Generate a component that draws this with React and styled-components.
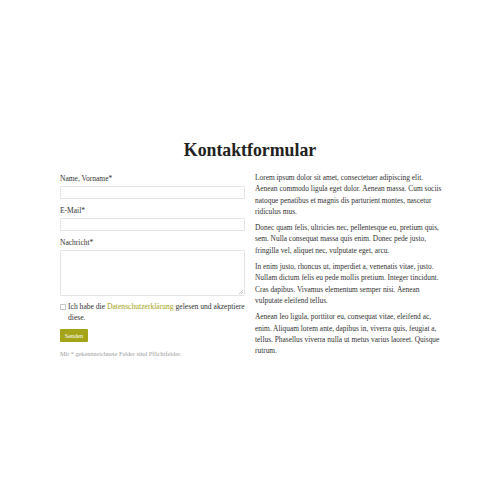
import React from "react";
import styled, { createGlobalStyle } from "styled-components";

const Global = createGlobalStyle`
  html, body { margin: 0; padding: 0; background: #fff; }
  body { font-family: "Liberation Serif", "DejaVu Serif", serif; color: #333; }
`;

const Page = styled.div`
  width: 380px;
  margin: 0 auto;
  padding-top: 139px;
`;

const Title = styled.h1`
  margin: 0 0 12px;
  text-align: center;
  font-family: "Liberation Serif", serif;
  font-size: 17.8px;
  line-height: 22px;
  font-weight: bold;
  color: #222;
`;

const Columns = styled.div`
  display: grid;
  grid-template-columns: 185px 185px;
  column-gap: 10px;
`;

const Form = styled.form`
  display: flex;
  flex-direction: column;
`;

const Label = styled.label`
  display: block;
  font-size: 7.5px;
  line-height: 11px;
  color: #333;
  margin-bottom: 2px;
`;

const Field = styled.input`
  display: block;
  box-sizing: border-box;
  width: 100%;
  height: 13px;
  margin: 0 0 6px;
  border: 1px solid #e4e4e4;
  border-radius: 1px;
  background: #fff;
  padding: 0;
  outline: none;
`;

const TextArea = styled.textarea`
  display: block;
  box-sizing: border-box;
  width: 100%;
  height: 46px;
  margin: 0 0 5px;
  border: 1px solid #e4e4e4;
  border-radius: 1px;
  padding: 0;
  resize: vertical;
  outline: none;
  &::-webkit-resizer {
    background: linear-gradient(
        135deg,
        transparent 0 45%,
        #c4c4c4 45% 58%,
        transparent 58% 72%,
        #c4c4c4 72% 85%,
        transparent 85%
      )
      right 1px bottom 1px / 4px 4px no-repeat;
  }
`;

const ConsentRow = styled.div`
  display: flex;
  align-items: flex-start;
  gap: 2px;
`;

const Box = styled.span`
  flex: none;
  width: 4px;
  height: 4px;
  margin-top: 3px;
  border: 0.5px solid #c8c8c8;
  border-radius: 0.5px;
  background: #fff;
`;

const ConsentText = styled.p`
  margin: 0;
  font-size: 7.6px;
  line-height: 11.3px;
  color: #333;
`;

const Link = styled.a`
  color: #a3a313;
  text-decoration: none;
`;

const Button = styled.button`
  align-self: flex-start;
  margin-top: 5px;
  width: 28px;
  height: 13px;
  padding: 0;
  border: none;
  border-radius: 1px;
  background: #a3a417;
  color: #fff;
  font-family: "Liberation Serif", serif;
  font-size: 6.3px;
  line-height: 13px;
`;

const Note = styled.p`
  margin: 7px 0 0;
  font-size: 6.3px;
  line-height: 9px;
  color: #a0a0a0;
`;

const Text = styled.div`
  font-size: 7.4px;
  line-height: 11.3px;
  color: #333;
  margin-top: -1px;
  white-space: nowrap;
`;

const P = styled.p`
  margin: 0 0 5px;
`;

const paragraphs = [
  [
    "Lorem ipsum dolor sit amet, consectetuer adipiscing elit.",
    "Aenean commodo ligula eget dolor. Aenean massa. Cum sociis",
    "natoque penatibus et magnis dis parturient montes, nascetur",
    "ridiculus mus.",
  ],
  [
    "Donec quam felis, ultricies nec, pellentesque eu, pretium quis,",
    "sem. Nulla consequat massa quis enim. Donec pede justo,",
    "fringilla vel, aliquet nec, vulputate eget, arcu.",
  ],
  [
    "In enim justo, rhoncus ut, imperdiet a, venenatis vitae, justo.",
    "Nullam dictum felis eu pede mollis pretium. Integer tincidunt.",
    "Cras dapibus. Vivamus elementum semper nisi. Aenean",
    "vulputate eleifend tellus.",
  ],
  [
    "Aenean leo ligula, porttitor eu, consequat vitae, eleifend ac,",
    "enim. Aliquam lorem ante, dapibus in, viverra quis, feugiat a,",
    "tellus. Phasellus viverra nulla ut metus varius laoreet. Quisque",
    "rutrum.",
  ],
];

export default function App() {
  return (
    <>
      <Global />
      <Page>
        <Title>Kontaktformular</Title>
        <Columns>
          <Form onSubmit={(e) => e.preventDefault()}>
            <Label>Name, Vorname*</Label>
            <Field type="text" />
            <Label>E-Mail*</Label>
            <Field type="email" />
            <Label>Nachricht*</Label>
            <TextArea />
            <ConsentRow>
              <Box />
              <ConsentText>
                Ich habe die <Link href="#">Datenschutzerklärung</Link> gelesen und akzeptiere
                <br />
                diese.
              </ConsentText>
            </ConsentRow>
            <Button type="submit">Senden</Button>
            <Note>Mit * gekennzeichnete Felder sind Pflichtfelder.</Note>
          </Form>
          <Text>
            {paragraphs.map((lines, i) => (
              <P key={i}>
                {lines.map((l, j) => (
                  <React.Fragment key={j}>
                    {l}
                    {j < lines.length - 1 && <br />}
                  </React.Fragment>
                ))}
              </P>
            ))}
          </Text>
        </Columns>
      </Page>
    </>
  );
}
